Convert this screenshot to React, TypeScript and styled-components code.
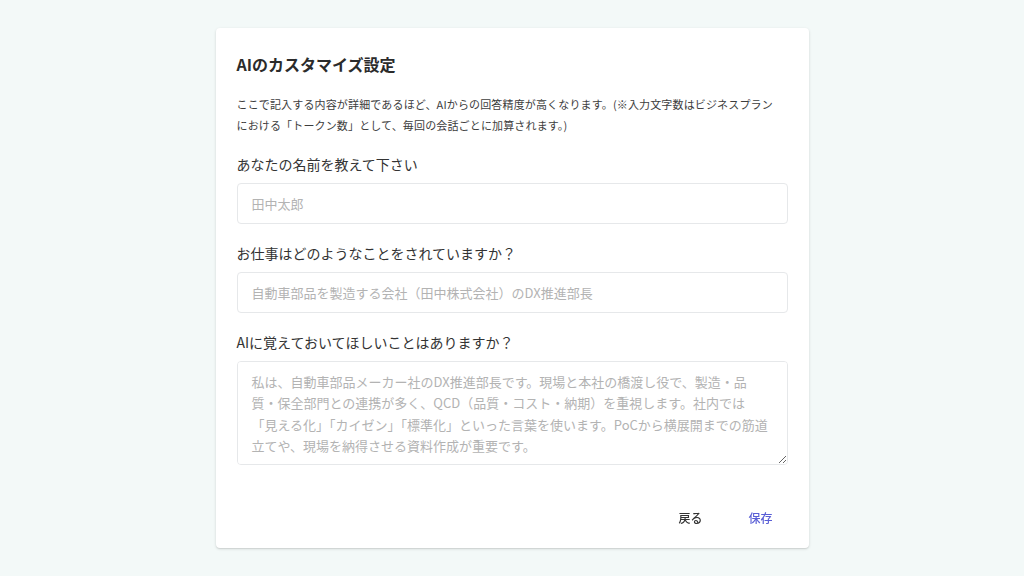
import React, { useState } from 'react';
import styled, { createGlobalStyle } from 'styled-components';

const GlobalStyle = createGlobalStyle`
  html, body, #root {
    margin: 0;
    padding: 0;
    height: 100%;
  }
  body {
    background: #f3f9f8;
    font-family: "Noto Sans CJK JP", "Noto Sans", sans-serif;
    color: #333;
  }
  * {
    box-sizing: border-box;
  }
`;

const Page = styled.div`
  height: 100%;
  display: flex;
  align-items: center;
  justify-content: center;
`;

const Card = styled.section`
  width: 593px;
  margin-top: -1px;
  background: #fff;
  border-radius: 4px;
  box-shadow: 0 1px 3px rgba(0, 0, 0, 0.14), 0 1px 1px rgba(0, 0, 0, 0.06);
  display: flex;
  flex-direction: column;
`;

const Body = styled.div`
  padding: 24px 21px 0;
  display: flex;
  flex-direction: column;
`;

const Title = styled.h2`
  margin: 0;
  font-size: 16px;
  line-height: 24px;
  font-weight: 700;
  color: #2b2b2b;
`;

const Description = styled.p`
  margin: 18px 0 0;
  font-size: 11px;
  line-height: 21px;
  letter-spacing: 0.15px;
  color: #3d3d3d;
`;

const Field = styled.div<{ $first?: boolean }>`
  display: flex;
  flex-direction: column;
  gap: 9px;
  margin-top: ${(p) => (p.$first ? '18px' : '19px')};
`;

const Label = styled.label`
  font-size: 14px;
  line-height: 20px;
  color: #333;
`;

const TextInput = styled.input`
  height: 41px;
  width: 100%;
  padding: 0 14px;
  border: 1px solid #e6e8ea;
  border-radius: 4px;
  font-family: inherit;
  font-size: 13px;
  color: #333;
  outline: none;

  &::placeholder {
    color: #b3b3b3;
  }
`;

const TextArea = styled.textarea`
  height: 104px;
  width: 100%;
  padding: 9px 14px;
  border: 1px solid #e6e8ea;
  border-radius: 4px;
  font-family: inherit;
  font-size: 13px;
  line-height: 21.6px;
  color: #333;
  outline: none;
  display: block;

  &::placeholder {
    color: #b3b3b3;
  }
`;

const Actions = styled.div`
  display: flex;
  justify-content: flex-end;
  gap: 6px;
  padding: 35px 16px 12px;
`;

const Button = styled.button<{ $primary?: boolean }>`
  min-width: 64px;
  height: 36px;
  padding: 6px 8px;
  border: none;
  border-radius: 4px;
  background: transparent;
  font-family: inherit;
  font-size: 12px;
  font-weight: 500;
  color: ${(p) => (p.$primary ? '#5a5fd6' : '#333')};
  cursor: pointer;

  &:hover {
    background: rgba(0, 0, 0, 0.04);
  }
`;

const memoPlaceholder =
  '私は、自動車部品メーカー社のDX推進部長です。現場と本社の橋渡し役で、製造・品\n' +
  '質・保全部門との連携が多く、QCD（品質・コスト・納期）を重視します。社内では\n' +
  '「見える化」「カイゼン」「標準化」といった言葉を使います。PoCから横展開までの筋道\n' +
  '立てや、現場を納得させる資料作成が重要です。';

const App: React.FC = () => {
  const [name, setName] = useState('');
  const [job, setJob] = useState('');
  const [memo, setMemo] = useState('');

  return (
    <>
      <GlobalStyle />
      <Page>
        <Card>
          <Body>
            <Title>AIのカスタマイズ設定</Title>
            <Description>
              ここで記入する内容が詳細であるほど、AIからの回答精度が高くなります。(※入力文字数はビジネスプラン
              <br />
              における「トークン数」として、毎回の会話ごとに加算されます。)
            </Description>

            <Field $first>
              <Label htmlFor="name">あなたの名前を教えて下さい</Label>
              <TextInput
                id="name"
                placeholder="田中太郎"
                value={name}
                onChange={(e) => setName(e.target.value)}
              />
            </Field>

            <Field>
              <Label htmlFor="job">お仕事はどのようなことをされていますか？</Label>
              <TextInput
                id="job"
                placeholder="自動車部品を製造する会社（田中株式会社）のDX推進部長"
                value={job}
                onChange={(e) => setJob(e.target.value)}
              />
            </Field>

            <Field>
              <Label htmlFor="memo">AIに覚えておいてほしいことはありますか？</Label>
              <TextArea
                id="memo"
                placeholder={memoPlaceholder}
                value={memo}
                onChange={(e) => setMemo(e.target.value)}
              />
            </Field>
          </Body>

          <Actions>
            <Button>戻る</Button>
            <Button $primary>保存</Button>
          </Actions>
        </Card>
      </Page>
    </>
  );
};

export default App;
